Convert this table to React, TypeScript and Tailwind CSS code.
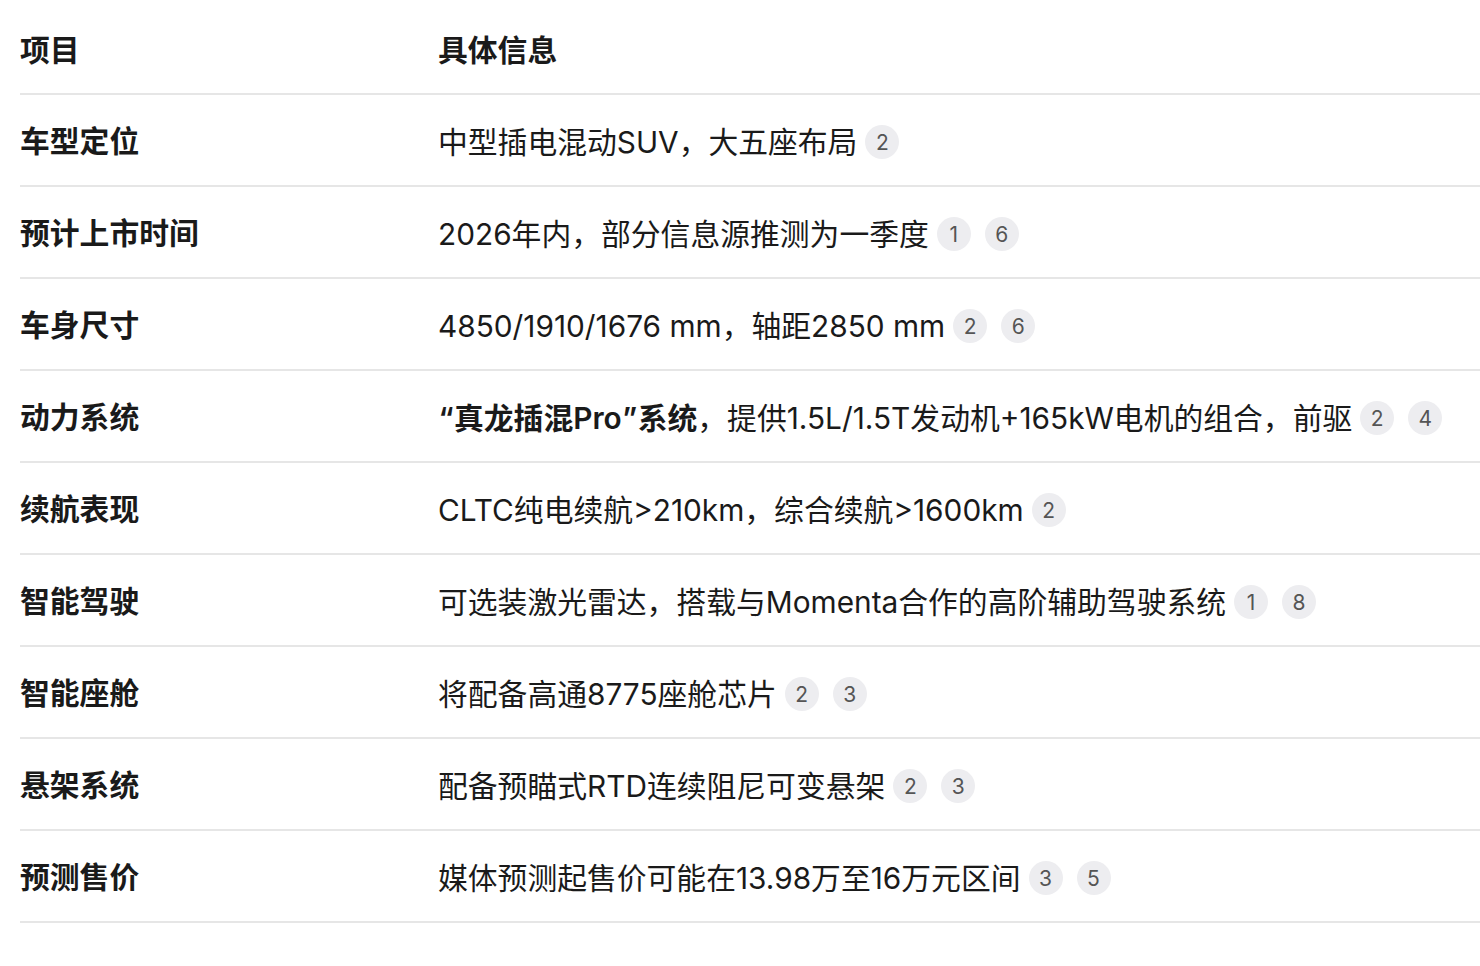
const Q = ({ c }: { c: string }) => (
  <span className="inline-block w-[16px] text-center">{c}</span>
);

const rows: { label: string; value: React.ReactNode; refs: number[] }[] = [
  { label: "车型定位", value: "中型插电混动SUV，大五座布局", refs: [2] },
  { label: "预计上市时间", value: "2026年内，部分信息源推测为一季度", refs: [1, 6] },
  { label: "车身尺寸", value: "4850/1910/1676 mm，轴距2850 mm", refs: [2, 6] },
  {
    label: "动力系统",
    value: (
      <>
        <span className="font-semibold">
          <Q c="“" />
          真龙插混Pro
          <Q c="”" />
          系统
        </span>
        ，提供1.5L/1.5T发动机+165kW电机的组合，前驱
      </>
    ),
    refs: [2, 4],
  },
  { label: "续航表现", value: "CLTC纯电续航>210km，综合续航>1600km", refs: [2] },
  { label: "智能驾驶", value: "可选装激光雷达，搭载与Momenta合作的高阶辅助驾驶系统", refs: [1, 8] },
  { label: "智能座舱", value: "将配备高通8775座舱芯片", refs: [2, 3] },
  { label: "悬架系统", value: "配备预瞄式RTD连续阻尼可变悬架", refs: [2, 3] },
  { label: "预测售价", value: "媒体预测起售价可能在13.98万至16万元区间", refs: [3, 5] },
];

const Badge = ({ n }: { n: number }) => (
  <span className="ml-[8px] mr-[6px] inline-flex h-[34px] w-[34px] items-center justify-center rounded-full bg-[#ededf0] align-middle text-[21px] leading-none text-[#555555]">
    {n}
  </span>
);

export default function App() {
  return (
    <div
      className="min-h-screen bg-white pl-[20px] text-[#1a1a1a]"
      style={{ fontFamily: '"Inter", "Noto Sans CJK SC", sans-serif' }}
    >
      <table className="w-full border-collapse text-left text-[29.8px]">
        <thead>
          <tr className="border-b-2 border-[#e6e6e6]">
            <th className="h-[94px] w-[418px] pt-[7px] font-bold">项目</th>
            <th className="h-[94px] pt-[7px] font-bold">具体信息</th>
          </tr>
        </thead>
        <tbody>
          {rows.map((r) => (
            <tr key={r.label} className="border-b-2 border-[#e6e6e6]">
              <td className="h-[92px] pt-[2px] font-bold">{r.label}</td>
              <td className="h-[92px] whitespace-nowrap pt-[2px]">
                <span className="align-middle">{r.value}</span>
                {r.refs.map((n, i) => (
                  <Badge key={i} n={n} />
                ))}
              </td>
            </tr>
          ))}
        </tbody>
      </table>
    </div>
  );
}
